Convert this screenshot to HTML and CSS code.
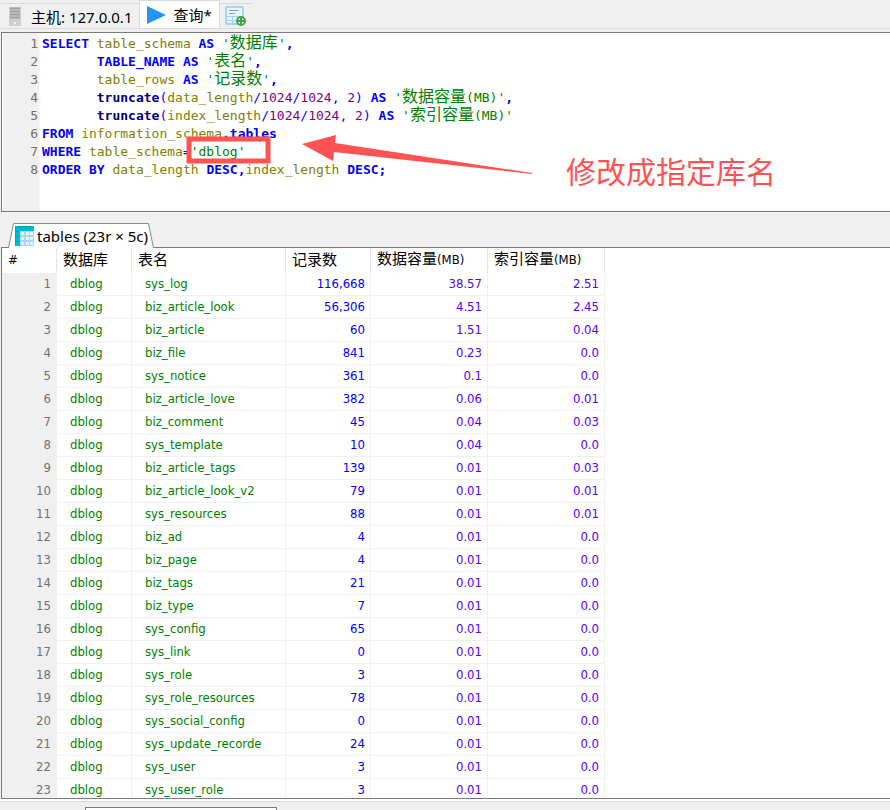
FILE: index.html
```
<!DOCTYPE html>
<html lang="zh-CN">
<head>
  <meta charset="UTF-8">
  <meta name="viewport" content="width=device-width, initial-scale=1.0">
  <link rel="stylesheet" href="styles.css">
  <title>查询</title>
</head>
<body>
  <div class="tabs">
    <button type="button" class="tab">
      <svg width="20" height="20" viewBox="0 0 20 20">
        <rect x="4" y="1" width="12" height="19" fill="#cfcfcf"/>
        <path d="M5 2.500h10M5 5.500h10M5 8.500h10M5 11.500h10" stroke="#a2a2a2" stroke-width="2"/>
        <path d="M9 17h2" stroke="#f0f0f0" stroke-width="2"/>
      </svg>
      主机: 127.0.0.1
    </button>
    <button type="button" class="tab active">
      <svg width="20" height="20" viewBox="0 0 20 20"><path d="M0 1L19 10L0 19z" fill="#2196f3"/></svg>
      查询*
    </button>
    <button type="button" class="tab new" aria-label="新建查询">
      <svg width="22" height="20" viewBox="0 0 22 20">
        <rect x="1" y="1" width="17" height="17" rx="1" fill="#e8f4fd" stroke="#a6d3f7" stroke-width="2"/>
        <path d="M4 4.500h9M4 7.500h6" stroke="#90a4ae" stroke-width="1"/>
        <path d="M1 10.500h17M7.500 10v8M12.500 10v8M1 14.500h17" stroke="#a6d3f7"/>
        <circle cx="16" cy="15" r="4" fill="#fff" stroke="#43a047" stroke-width="2"/>
        <path d="M13 15h6M16 12v6" stroke="#43a047" stroke-width="2"/>
      </svg>
    </button>
  </div>

  <div class="editor">
<pre class="gutter">1
2
3
4
5
6
7
8</pre>
<pre class="code"><b>SELECT</b> <i>table_schema</i> <b>AS</b> <q>'<span class="cn">数据库</span>'</q><b>,</b>
       <b>TABLE_NAME</b> <b>AS</b> <q>'<span class="cn">表名</span>'</q><b>,</b>
       <i>table_rows</i> <b>AS</b> <q>'<span class="cn">记录数</span>'</q><b>,</b>
       <b class="fn">truncate</b><u>(</u><i>data_length</i><u>/</u><s>1024</s><u>/</u><s>1024</s><u>,</u> <s>2</s><u>)</u> <b>AS</b> <q>'<span class="cn">数据容量</span>(MB)'</q><b>,</b>
       <b class="fn">truncate</b><u>(</u><i>index_length</i><u>/</u><s>1024</s><u>/</u><s>1024</s><u>,</u> <s>2</s><u>)</u> <b>AS</b> <q>'<span class="cn">索引容量</span>(MB)'</q>
<b>FROM</b> <i>information_schema</i><b>.tables</b>
<b>WHERE</b> <i>table_schema</i><u>=</u><q>'dblog'</q>
<b>ORDER BY</b> <i>data_length</i> <b>DESC,</b><i>index_length</i> <b>DESC;</b></pre>
    <!-- marks drawn over the query -->
    <svg class="marks" width="600" height="178" viewBox="0 0 600 178">
      <rect x="187" y="106" width="79" height="22" fill="none" stroke="#ff5252" stroke-width="5"/>
      <path d="M300 111L334 102L333 110L530 140L530 141L332 119L331 128z" fill="#ff5252"/>
    </svg>
    <span class="note">修改成指定库名</span>
  </div>

  <div class="result-tabs">
    <button type="button" class="result-tab">
      <svg class="shape" width="146" height="25" viewBox="0 0 146 25"><path d="M0.500 25L5.500 0.500H140.500L145.500 25" fill="#fff" stroke="#8a8a8a"/></svg>
      <svg class="icon" width="20" height="20" viewBox="0 0 20 20">
        <rect width="19" height="20" fill="#a9d5fb"/>
        <path d="M0 0h19v5H5v15H0z" fill="#00bcd4"/>
        <path d="M6 6h3v3H6zM11 6h3v3h-3zM15 6h3v3h-3zM6 11h3v3H6zM11 11h3v3h-3zM15 11h3v3h-3zM6 16h3v3H6zM11 16h3v3h-3zM15 16h3v3h-3z" fill="#e8f4fe"/>
        <path d="M0.500 0v20M5.500 0v5M10.500 0v5M14.500 0v5M0 0.500h19M0 5.500h5M0 10.500h5M0 15.500h5" stroke="#00a5bb"/>
      </svg>
      <span>tables (23r × 5c)</span>
    </button>
  </div>

  <div class="result">
    <table>
      <colgroup><col class="c-no"><col class="c-db"><col class="c-name"><col class="c-rows"><col class="c-size"><col class="c-size"></colgroup>
      <thead>
        <tr><th>#</th><th>数据库</th><th>表名</th><th>记录数</th><th>数据容量<small>(MB)</small></th><th>索引容量<small>(MB)</small></th></tr>
      </thead>
      <tbody>
        <tr><td>1</td><td>dblog</td><td>sys_log</td><td>116,668</td><td>38.57</td><td>2.51</td></tr>
        <tr><td>2</td><td>dblog</td><td>biz_article_look</td><td>56,306</td><td>4.51</td><td>2.45</td></tr>
        <tr><td>3</td><td>dblog</td><td>biz_article</td><td>60</td><td>1.51</td><td>0.04</td></tr>
        <tr><td>4</td><td>dblog</td><td>biz_file</td><td>841</td><td>0.23</td><td>0.0</td></tr>
        <tr><td>5</td><td>dblog</td><td>sys_notice</td><td>361</td><td>0.1</td><td>0.0</td></tr>
        <tr><td>6</td><td>dblog</td><td>biz_article_love</td><td>382</td><td>0.06</td><td>0.01</td></tr>
        <tr><td>7</td><td>dblog</td><td>biz_comment</td><td>45</td><td>0.04</td><td>0.03</td></tr>
        <tr><td>8</td><td>dblog</td><td>sys_template</td><td>10</td><td>0.04</td><td>0.0</td></tr>
        <tr><td>9</td><td>dblog</td><td>biz_article_tags</td><td>139</td><td>0.01</td><td>0.03</td></tr>
        <tr><td>10</td><td>dblog</td><td>biz_article_look_v2</td><td>79</td><td>0.01</td><td>0.01</td></tr>
        <tr><td>11</td><td>dblog</td><td>sys_resources</td><td>88</td><td>0.01</td><td>0.01</td></tr>
        <tr><td>12</td><td>dblog</td><td>biz_ad</td><td>4</td><td>0.01</td><td>0.0</td></tr>
        <tr><td>13</td><td>dblog</td><td>biz_page</td><td>4</td><td>0.01</td><td>0.0</td></tr>
        <tr><td>14</td><td>dblog</td><td>biz_tags</td><td>21</td><td>0.01</td><td>0.0</td></tr>
        <tr><td>15</td><td>dblog</td><td>biz_type</td><td>7</td><td>0.01</td><td>0.0</td></tr>
        <tr><td>16</td><td>dblog</td><td>sys_config</td><td>65</td><td>0.01</td><td>0.0</td></tr>
        <tr><td>17</td><td>dblog</td><td>sys_link</td><td>0</td><td>0.01</td><td>0.0</td></tr>
        <tr><td>18</td><td>dblog</td><td>sys_role</td><td>3</td><td>0.01</td><td>0.0</td></tr>
        <tr><td>19</td><td>dblog</td><td>sys_role_resources</td><td>78</td><td>0.01</td><td>0.0</td></tr>
        <tr><td>20</td><td>dblog</td><td>sys_social_config</td><td>0</td><td>0.01</td><td>0.0</td></tr>
        <tr><td>21</td><td>dblog</td><td>sys_update_recorde</td><td>24</td><td>0.01</td><td>0.0</td></tr>
        <tr><td>22</td><td>dblog</td><td>sys_user</td><td>3</td><td>0.01</td><td>0.0</td></tr>
        <tr><td>23</td><td>dblog</td><td>sys_user_role</td><td>3</td><td>0.01</td><td>0.0</td></tr>
      </tbody>
    </table>
  </div>

  <div class="bottom">
    <input type="text" class="filter" aria-label="过滤">
  </div>
</body>
</html>
```
FILE: styles.css
```
* {
  margin: 0;
  padding: 0;
  box-sizing: border-box;
}

body {
  height: 100vh;
  display: flex;
  flex-direction: column;
  overflow: hidden;
  background-color: #f0f0f0;
  font-family: "Noto Sans", "Noto Sans CJK SC", sans-serif;
  font-size: 15px;
}

button {
  border: 0;
  background: none;
  font: inherit;
  color: #000;
}

.tabs {
  display: flex;
  align-items: flex-end;
  height: 29px;
  flex: none;
  border-bottom: 1px solid #dadada;
}

.tab {
  display: flex;
  align-items: center;
  gap: 6px;
  height: 25px;
  padding: 0 7px 0 5px;
  border-top: 1px solid #dadada;
  white-space: nowrap;
}

.tab.active {
  height: 28px;
  padding: 0 7px;
  border: 1px solid #dadada;
  border-bottom: 0;
  background-color: #fff;
}

.tab.new {
  padding: 0 5px;
}

.editor {
  position: relative;
  display: flex;
  flex: none;
  height: 180px;
  margin: 3px 0 0 1px;
  border: 1px solid #7a7a7a;
  border-right: 0;
  background-color: #fff;
}

pre {
  padding-top: 2px;
  font-family: "DejaVu Sans Mono", "Noto Sans CJK SC", monospace;
  font-size: 13px;
  line-height: 18px;
}

.gutter {
  width: 37px;
  margin-left: 1px;
  padding-right: 1px;
  border-right: 1px solid #f8f8f8;
  background-color: #f0f0f0;
  color: #707070;
  text-align: right;
}

.code {
  padding-left: 2px;
  color: #0000ff;
}

.code i {
  font-style: normal;
  color: #808000;
}

.code q {
  quotes: none;
  color: #008000;
}

.code s {
  text-decoration: none;
  color: #800080;
}

.code u {
  text-decoration: none;
}

.code .fn {
  color: #000080;
}

.code .cn {
  font-size: 16px;
  line-height: 1px;
}

.marks {
  position: absolute;
  top: 0;
  left: 0;
}

.note {
  position: absolute;
  top: 115px;
  left: 564px;
  color: #ff5252;
  font-family: "Noto Sans CJK SC", sans-serif;
  font-size: 30px;
  line-height: 44px;
}

.result-tabs {
  flex: none;
  display: flex;
  align-items: flex-end;
  height: 35px;
  padding-left: 8px;
}

.result-tab {
  position: relative;
  display: flex;
  align-items: center;
  gap: 2px;
  height: 24px;
  padding: 2px 8px 0 7px;
  white-space: nowrap;
}

.result-tab .shape {
  position: absolute;
  top: 0;
  left: 0;
}

.result-tab .icon,
.result-tab span {
  position: relative;
}

.result {
  flex: 1;
  min-height: 0;
  overflow: hidden;
  margin-left: 1px;
  border: 1px solid #7a7a7a;
  border-right: 0;
  background-color: #fff;
}

table {
  width: 603px;
  table-layout: fixed;
  border-collapse: separate;
  border-spacing: 0;
  font-family: "DejaVu Sans Condensed", "Noto Sans CJK SC", sans-serif;
  font-size: 13px;
}

.c-no {
  width: 55px;
}

.c-db {
  width: 75px;
}

.c-name {
  width: 154px;
}

.c-rows {
  width: 85px;
}

.c-size {
  width: 117px;
}

th {
  height: 24px;
  padding: 0 6px 2px;
  border-right: 1px solid #e5e5e5;
  font-size: 15px;
  font-weight: normal;
  line-height: 22px;
  text-align: left;
  white-space: nowrap;
}

th:first-child,
th small {
  font-size: 13px;
}

td {
  height: 23px;
  padding: 0 5px 0 13px;
  border-right: 1px solid #f0f0f0;
  border-bottom: 1px solid #f0f0f0;
  color: #5500ff;
  line-height: 22px;
  text-align: right;
}

td:nth-child(1) {
  background-color: #f0f0f0;
  color: #707070;
}

td:nth-child(2),
td:nth-child(3) {
  color: #008000;
  text-align: left;
}

td:nth-child(4) {
  color: #0000ff;
}

.bottom {
  flex: none;
  height: 11px;
  overflow: hidden;
  padding-left: 85px;
  border-top: 2px solid #fff;
  box-shadow: inset 0 1px #dadada;
}

.filter {
  display: block;
  width: 192px;
  height: 24px;
  margin-top: 6px;
  border: 1px solid #7a7a7a;
  background-color: #fff;
}
```
